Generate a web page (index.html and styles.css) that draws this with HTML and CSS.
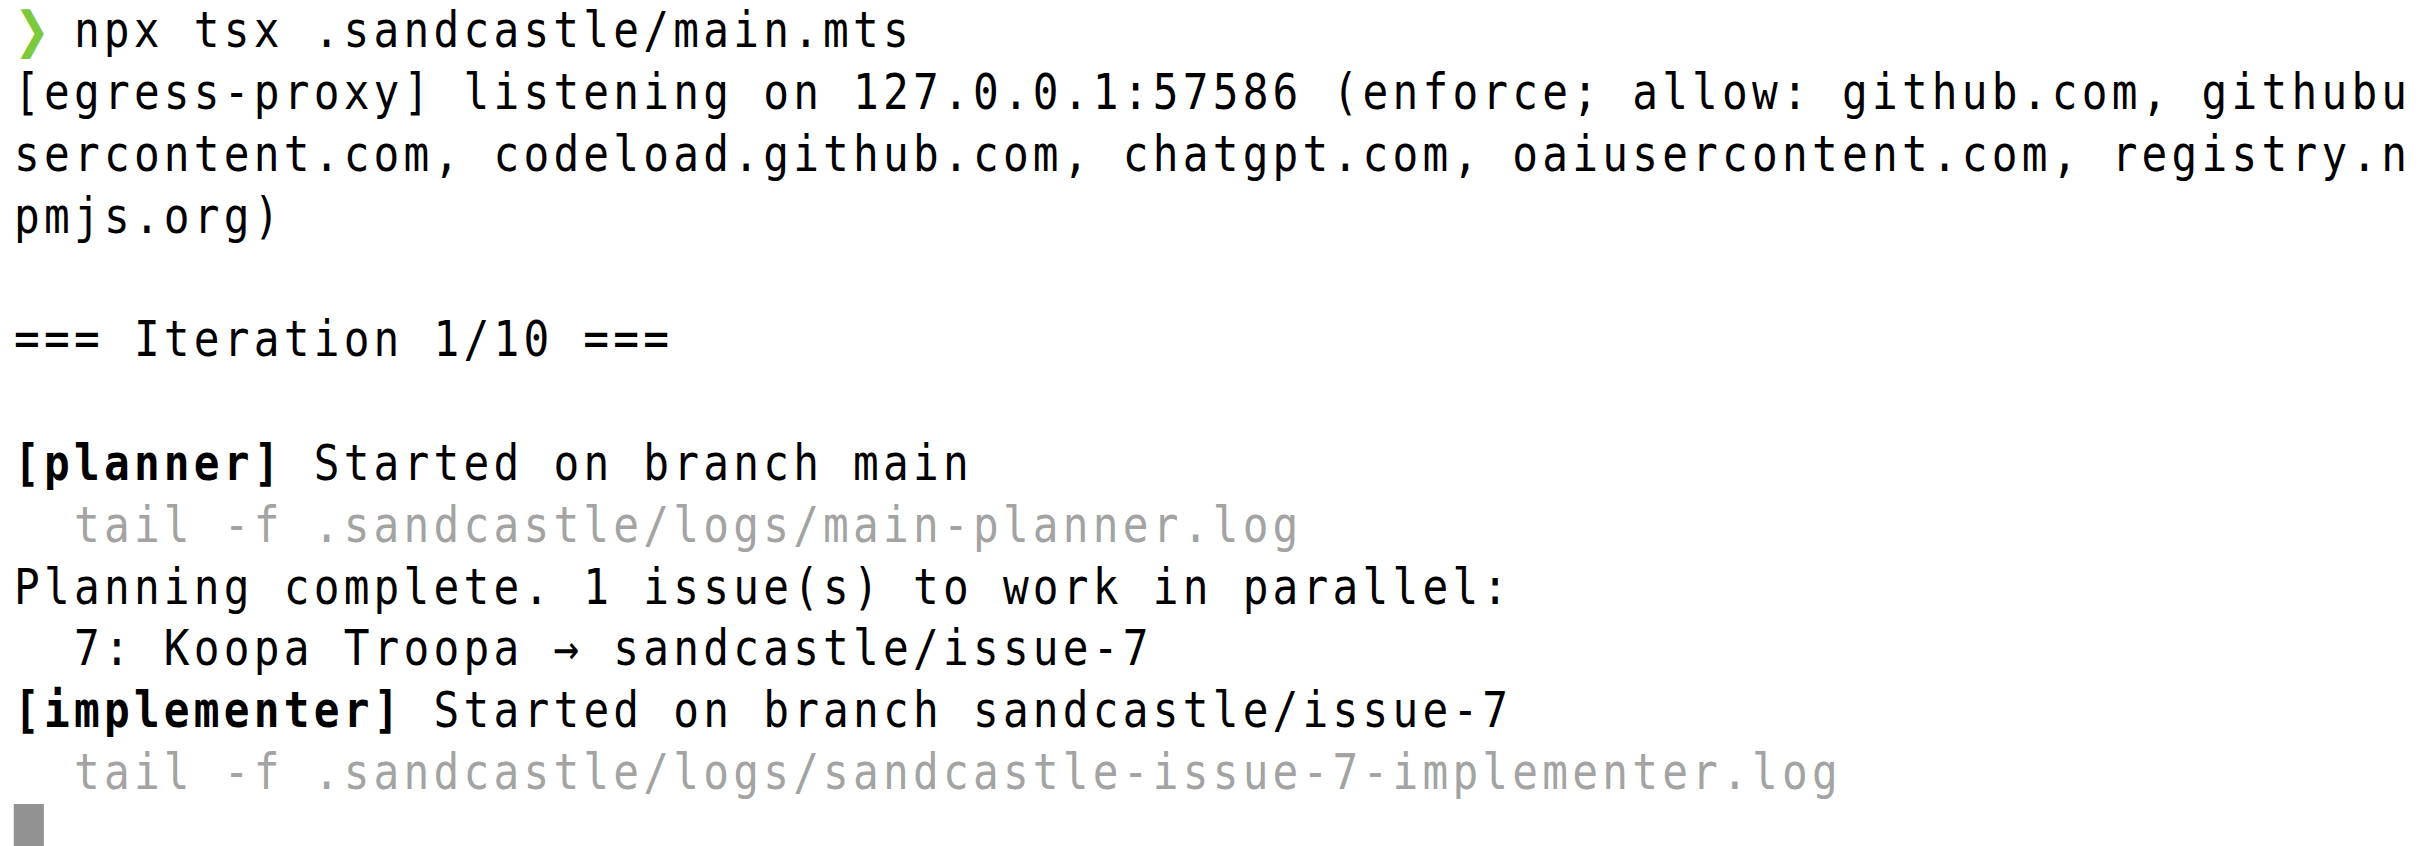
FILE: index.html
```html
<!DOCTYPE html>
<html>
<head>
<meta charset="utf-8">
<link rel="stylesheet" href="styles.css">
</head>
<body>
<main class="term">
<div class="line"><span class="prompt">❯</span> npx tsx .sandcastle/main.mts</div>
<div class="line">[egress-proxy] listening on 127.0.0.1:57586 (enforce; allow: github.com, githubu</div>
<div class="line">sercontent.com, codeload.github.com, chatgpt.com, oaiusercontent.com, registry.n</div>
<div class="line">pmjs.org)</div>
<div class="line"> </div>
<div class="line">=== Iteration 1/10 ===</div>
<div class="line"> </div>
<div class="line"><b class="tag">[planner]</b> Started on branch main</div>
<div class="line dim">  tail -f .sandcastle/logs/main-planner.log</div>
<div class="line">Planning complete. 1 issue(s) to work in parallel:</div>
<div class="line">  7: Koopa Troopa → sandcastle/issue-7</div>
<div class="line"><b class="tag">[implementer]</b> Started on branch sandcastle/issue-7</div>
<div class="line dim">  tail -f .sandcastle/logs/sandcastle-issue-7-implementer.log</div>
<div class="line"><span class="cursor"></span></div>
</main>
</body>
</html>
```

FILE: styles.css
```css
html, body {
  margin: 0;
  padding: 0;
  background: #ffffff;
  overflow: hidden;
}
.term {
  padding: 0 0 0 16.3px;
  font-family: "DejaVu Sans Mono", "Liberation Mono", monospace;
  font-size: 49.7px;
  line-height: 61.85px;
  letter-spacing: 4.93px;
  color: #000000;
  transform: scaleX(0.86);
  transform-origin: 0 0;
}
.line {
  height: 61.85px;
  white-space: pre;
}
.tag {
  font-weight: bold;
}
.dim {
  color: #a3a3a3;
}
.prompt {
  display: inline-block;
  width: 34.8px;
  letter-spacing: 0;
  color: #7cc93b;
  font-family: "DejaVu Sans", sans-serif;
  text-align: center;
}
.cursor {
  display: inline-block;
  width: 34.8px;
  height: 61.85px;
  background: #929292;
  vertical-align: top;
}
```
